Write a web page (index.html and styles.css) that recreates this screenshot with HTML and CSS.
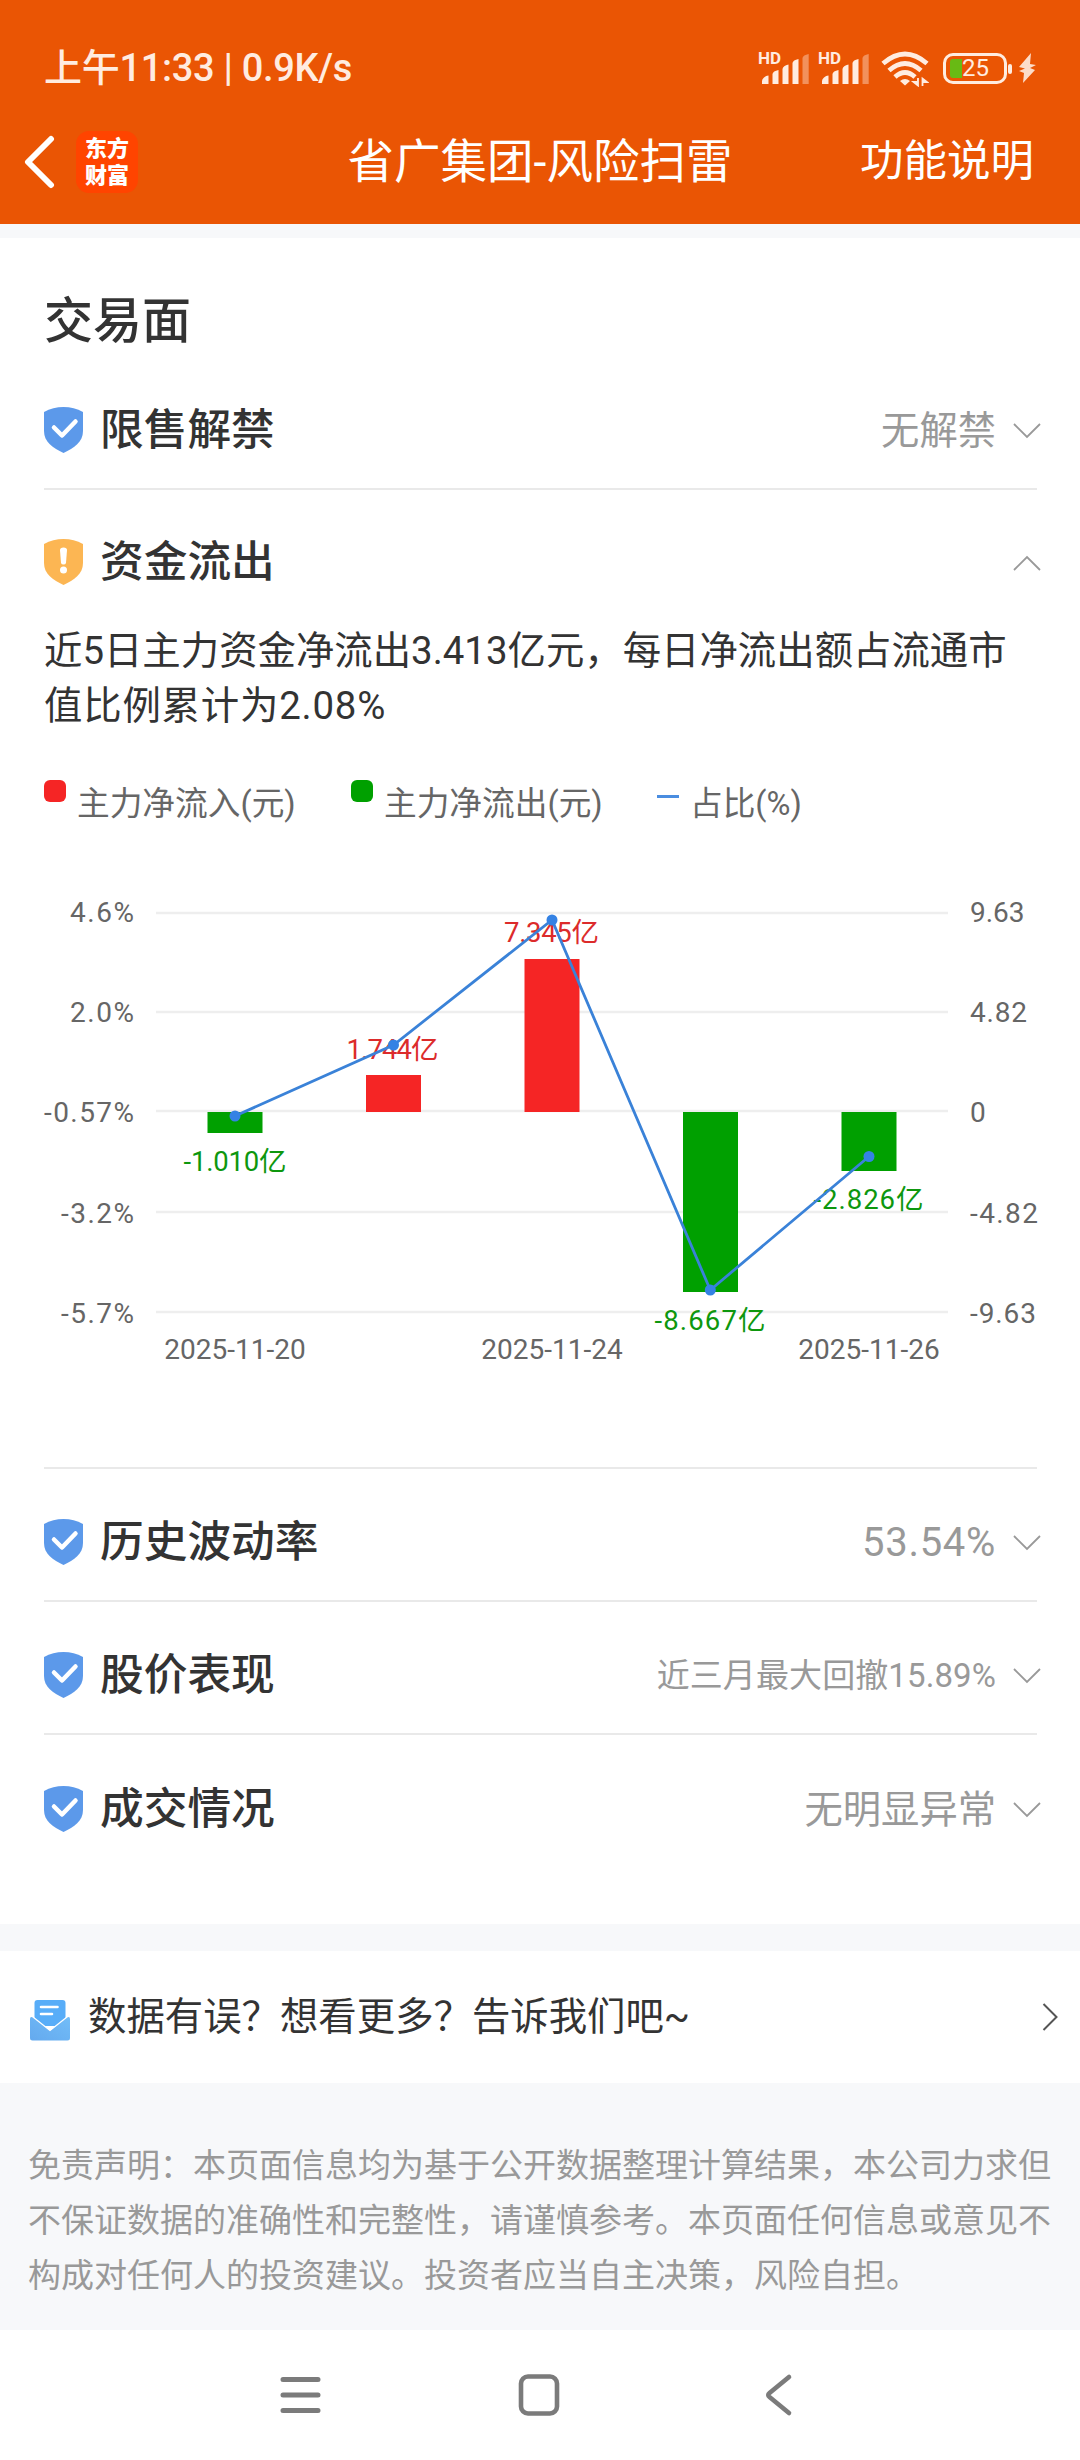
FILE: index.html
```html
<!DOCTYPE html>
<html lang="zh-CN">
<head>
    <meta charset="UTF-8">
    <meta name="viewport" content="width=device-width, initial-scale=1.0">
    <title>省广集团-风险扫雷</title>
    <link rel="stylesheet" href="styles.css">
</head>
<body>

<!-- shared icons -->
<svg class="sprite" width="0" height="0">
    <symbol id="signal" viewBox="0 0 50 34">
        <path d="M2 33V30Q2 28 4 26.500Q6 24.700 8.500 24.500V33Z"/>
        <path d="M12.500 33V23Q13 20 18.500 19V33Z"/>
        <path d="M22.500 33V18Q23 14.500 28.500 13.500V33Z"/>
        <path d="M32.500 33V12Q33 9 38.500 8V33Z"/>
        <path d="M42.500 33V7Q43 4 48.700 3V33Z" opacity="0.4"/>
    </symbol>
    <symbol id="shield" viewBox="0 0 39 46">
        <path d="M0 5Q9 0 19.500 0T39 5V24C39 35 30 41 19.500 46C9 41 0 35 0 24Z"/>
    </symbol>
    <symbol id="check" viewBox="0 0 39 46">
        <path d="M10 20.500L18 28.500L31.500 14.500" fill="none" stroke="#fff" stroke-width="4.500" stroke-linecap="round" stroke-linejoin="round"/>
    </symbol>
    <symbol id="arrow" viewBox="0 0 28 16">
        <path d="M1 1L14 14L27 1" fill="none" stroke="#999" stroke-width="1.800"/>
    </symbol>
</svg>

<header>
    <div class="status-bar">
        <span class="status-time">上午11:33 | 0.9K/s</span>
        <div class="status-icons">
            <div class="signal">
                <svg width="50" height="34"><use href="#signal"/></svg>
                <span class="hd">HD</span>
            </div>
            <div class="signal">
                <svg width="50" height="34"><use href="#signal"/></svg>
                <span class="hd">HD</span>
            </div>
            <svg class="wifi" width="48" height="36" viewBox="0 0 48 36">
                <g fill="none" stroke="#ffece0" stroke-width="4.800">
                    <path d="M2 12.500Q24 -6.500 46 12.500"/>
                    <path d="M8 19.500Q24 5.500 40 19.500"/>
                    <path d="M14 26Q24 17 34 26"/>
                </g>
                <path d="M19 30Q24 26 29 30L24 34.500Z"/>
                <path d="M37 27V34.500L32.500 31H36M41.500 35V27.500L46 31H42" stroke="#ffece0" stroke-width="1.800"/>
            </svg>
            <div class="battery">
                <div class="battery-level"></div>
                <span>25</span>
            </div>
            <svg class="bolt" width="19" height="32" viewBox="0 0 19 32">
                <path d="M13 1L1 15L7 16.500L1 19L6 21L5 31L17 18L12 16L18 13L12 12Z"/>
            </svg>
        </div>
    </div>
    <div class="title-bar">
        <svg class="back" width="32" height="54" viewBox="0 0 32 54">
            <path d="M28 4L5 27L28 50" fill="none" stroke="#fff" stroke-width="6" stroke-linecap="round" stroke-linejoin="round"/>
        </svg>
        <div class="logo">东方<br>财富</div>
        <h1>省广集团-风险扫雷</h1>
        <span class="help">功能说明</span>
    </div>
</header>

<main>
    <section class="card">
        <h2>交易面</h2>

        <div class="item first">
            <svg class="icon blue" width="39" height="46"><use href="#shield"/><use href="#check"/></svg>
            <h3>限售解禁</h3>
            <span class="value">无解禁</span>
            <svg class="arrow" width="28" height="16"><use href="#arrow"/></svg>
        </div>

        <div class="item open">
            <svg class="icon orange" width="39" height="46">
                <use href="#shield"/>
                <path d="M16 11Q16 8.500 19.500 8.500T23 11L22 24Q21.500 25.500 19.500 25.500T17 24Z" fill="#fff"/>
                <circle cx="19.500" cy="31" r="3.500" fill="#fff"/>
            </svg>
            <h3>资金流出</h3>
            <span class="value"></span>
            <svg class="arrow up" width="28" height="16"><use href="#arrow"/></svg>
        </div>

        <div class="detail">
            <p>近5日主力资金净流出3.413亿元，每日净流出额占流通市</p>
            <p class="second">值比例累计为2.08%</p>
            <div class="legend">
                <span class="in"><i></i>主力净流入(元)</span>
                <span class="out"><i></i>主力净流出(元)</span>
                <span class="rate"><i></i>占比(%)</span>
            </div>
            <svg class="chart" width="1080" height="520" viewBox="0 860 1080 520">
                <g class="grid">
                    <path d="M156 913H948M156 1012H948M156 1111H948M156 1212H948M156 1312H948"/>
                </g>
                <g class="axis left">
                    <text x="134" y="921.500" textLength="64">4.6%</text>
                    <text x="134" y="1021.500" textLength="64">2.0%</text>
                    <text x="134" y="1121.500" textLength="90">-0.57%</text>
                    <text x="134" y="1222.500" textLength="73">-3.2%</text>
                    <text x="134" y="1322.500" textLength="73">-5.7%</text>
                </g>
                <g class="axis">
                    <text x="970" y="921.500">9.63</text>
                    <text x="970" y="1021.500" textLength="57">4.82</text>
                    <text x="970" y="1121.500">0</text>
                    <text x="970" y="1222.500" textLength="68">-4.82</text>
                    <text x="970" y="1322.500" textLength="66">-9.63</text>
                </g>
                <g class="axis date">
                    <text x="235" y="1359">2025-11-20</text>
                    <text x="552" y="1359">2025-11-24</text>
                    <text x="869" y="1359">2025-11-26</text>
                </g>
                <g class="bar-in">
                    <rect x="366" y="1075" width="55" height="37"/>
                    <rect x="524.500" y="959" width="55" height="153"/>
                </g>
                <g class="bar-out">
                    <rect x="207.500" y="1112" width="55" height="21"/>
                    <rect x="683" y="1112" width="55" height="180"/>
                    <rect x="841.500" y="1112" width="55" height="59"/>
                </g>
                <g class="label">
                    <text class="red" x="392.500" y="1059" textLength="92">1.744亿</text>
                    <text class="red" x="551.500" y="941.500" textLength="95">7.345亿</text>
                    <text class="green" x="235" y="1170.500" textLength="103">-1.010亿</text>
                    <text class="green" x="710" y="1329.500" textLength="111">-8.667亿</text>
                    <text class="green" x="868.500" y="1209" textLength="110">-2.826亿</text>
                </g>
                <polyline class="line" points="235,1116 393.500,1045 552,920 710.300,1290 869,1156.500"/>
                <g class="dot">
                    <circle cx="235" cy="1116" r="5.500"/>
                    <circle cx="393.500" cy="1045" r="5.500"/>
                    <circle cx="552" cy="920" r="5.500"/>
                    <circle cx="710.300" cy="1290" r="5.500"/>
                    <circle cx="869" cy="1156.500" r="5.500"/>
                </g>
            </svg>
        </div>

        <div class="item">
            <svg class="icon blue" width="39" height="46"><use href="#shield"/><use href="#check"/></svg>
            <h3>历史波动率</h3>
            <span class="value number">53.54%</span>
            <svg class="arrow" width="28" height="16"><use href="#arrow"/></svg>
        </div>

        <div class="item">
            <svg class="icon blue" width="39" height="46"><use href="#shield"/><use href="#check"/></svg>
            <h3>股价表现</h3>
            <span class="value small">近三月最大回撤15.89%</span>
            <svg class="arrow" width="28" height="16"><use href="#arrow"/></svg>
        </div>

        <div class="item last">
            <svg class="icon blue" width="39" height="46"><use href="#shield"/><use href="#check"/></svg>
            <h3>成交情况</h3>
            <span class="value">无明显异常</span>
            <svg class="arrow" width="28" height="16"><use href="#arrow"/></svg>
        </div>
    </section>

    <section class="feedback">
        <svg class="mail" width="40" height="41" viewBox="0 0 40 41">
            <defs>
                <linearGradient id="mail" x1="0" y1="1" x2="1" y2="0">
                    <stop offset="0" stop-color="#64a9ee"/>
                    <stop offset="1" stop-color="#72bdf8"/>
                </linearGradient>
            </defs>
            <path d="M4.500 3Q4.500 0 7.500 0H32.500Q35.500 0 35.500 3V26H4.500Z" fill="#58adf8"/>
            <path d="M11 7H27.500M11 14H22" stroke="#fff" stroke-width="2.600" stroke-linecap="round"/>
            <path d="M0 19Q0 16 3 17.500L20 30.500L37 17.500Q40 16 40 19V38Q40 40.500 37.500 40.500H2.500Q0 40.500 0 38Z" fill="url(#mail)"/>
            <path d="M3 17L20 30.500L37 17" fill="none" stroke="#fff" stroke-width="1.300"/>
        </svg>
        <span>数据有误？想看更多？告诉我们吧~</span>
        <svg width="16" height="28" viewBox="0 0 16 28">
            <path d="M1.500 1L14.500 14L1.500 27" fill="none" stroke="#555" stroke-width="2"/>
        </svg>
    </section>

    <p class="disclaimer">免责声明：本页面信息均为基于公开数据整理计算结果，本公司力求但不保证数据的准确性和完整性，请谨慎参考。本页面任何信息或意见不构成对任何人的投资建议。投资者应当自主决策，风险自担。</p>
</main>

<nav>
    <svg width="42" height="44" viewBox="0 0 42 44">
        <path d="M4 6.500H39M4 22H39M4 37.500H39" fill="none" stroke="#7b7b7b" stroke-width="5" stroke-linecap="round"/>
    </svg>
    <svg width="42" height="44" viewBox="0 0 42 44">
        <rect x="3" y="3.500" width="36" height="37" rx="7" fill="none" stroke="#7b7b7b" stroke-width="4.600"/>
    </svg>
    <svg width="42" height="44" viewBox="0 0 42 44">
        <path d="M32 4L12.500 20Q10 22 12.500 24L32 40" fill="none" stroke="#7b7b7b" stroke-width="4.600" stroke-linecap="round"/>
    </svg>
</nav>

</body>
</html>
```

FILE: styles.css
```css
* {
    box-sizing: border-box;
}

body {
    font-family: Roboto, "Noto Sans CJK SC", sans-serif;
    background-color: #FFFFFF;
    color: #333333;
    margin: 0;
    padding: 0;
    width: 1080px;
}

h1, h2, h3, p {
    margin: 0;
}

svg {
    display: block;
    flex: none;
}

.sprite {
    position: absolute;
}

header {
    height: 224px;
    background-color: #EA5504;
    color: #FFFFFF;
}

.status-bar {
    display: flex;
    justify-content: space-between;
    height: 99px;
    padding: 45px 43px 0 44px;
    color: #FFECE0;
}

.status-time {
    font-size: 38px;
    font-weight: 500;
    line-height: 46px;
    letter-spacing: -0.3px;
    white-space: pre;
}

.status-icons {
    display: flex;
    align-items: flex-start;
    padding-top: 6px;
    fill: #FFECE0;
}

.signal {
    position: relative;
    margin-right: 10px;
}

.signal svg {
    margin-left: -1px;
    margin-right: 1px;
}

.hd {
    position: absolute;
    left: -3px;
    top: -1px;
    font-size: 17px;
    font-weight: 700;
    line-height: 16px;
}

.battery {
    position: relative;
    width: 64px;
    height: 31px;
    margin: 2px 0 0 14px;
    padding-left: 16px;
    border: 3px solid #FFECE0;
    border-radius: 10px;
    font-size: 24px;
    line-height: 25px;
}

.battery::after {
    content: "";
    position: absolute;
    right: -8px;
    top: 8px;
    width: 4px;
    height: 10px;
    border-radius: 2px;
    background-color: #FFECE0;
}

.battery-level {
    position: absolute;
    left: 4px;
    top: 3px;
    width: 12px;
    height: 19px;
    border-radius: 3px 0 0 3px;
    background-color: #68BA14;
}

.bolt {
    margin: 1px 0 0 11px;
    opacity: 0.9;
}

.title-bar {
    display: flex;
    align-items: center;
    height: 126px;
    padding: 0 46px 0 23px;
}

.logo {
    width: 62px;
    height: 62px;
    margin-left: 21px;
    padding-top: 4px;
    border-radius: 13px;
    background-color: #FF4400;
    font-size: 22px;
    font-weight: 900;
    line-height: 27px;
    text-align: center;
}

h1 {
    width: 390px;
    margin-left: 207px;
    font-size: 46.5px;
    font-weight: 400;
    line-height: 61px;
    text-align: center;
    white-space: nowrap;
}

.help {
    margin-left: auto;
    font-size: 43.5px;
    line-height: 60px;
}

main {
    border-top: 14px solid #F7F8FA;
}

.card {
    height: 1686px;
    padding: 0 43px 0 44px;
}

h2 {
    height: 133px;
    font-size: 49px;
    font-weight: 500;
    line-height: 167px;
}

.item {
    display: flex;
    align-items: center;
    height: 133px;
    padding-top: 14px;
    border-bottom: 2px solid #E9E9E9;
}

.item.first {
    height: 119px;
    padding-top: 0;
}

.item.open {
    height: 118px;
    margin-top: 13px;
    padding-top: 0;
}

.item.open,
.item.last {
    border-bottom: none;
}

.icon.blue {
    fill: #5C99EA;
}

.icon.orange {
    fill: #FCB653;
}

h3 {
    margin-left: 17px;
    font-size: 43.7px;
    font-weight: 500;
    line-height: 60px;
}

.value {
    margin-left: auto;
    padding-top: 2px;
    color: #999999;
    font-size: 38.3px;
    line-height: 50px;
}

.value.number {
    font-size: 40px;
    letter-spacing: 0.7px;
}

.value.small {
    font-size: 33px;
    letter-spacing: 0.1px;
}

.arrow {
    margin: 2px -4px 0 17px;
}

.arrow.up {
    transform: rotate(180deg);
}

.detail {
    height: 848px;
    border-bottom: 2px solid #E9E9E9;
}

.detail p {
    padding-top: 2px;
    font-size: 38.4px;
    line-height: 55px;
    white-space: nowrap;
}

.detail .second {
    padding-top: 0;
    letter-spacing: 0.8px;
}

.legend {
    display: flex;
    height: 127px;
    padding-top: 46px;
    color: #666666;
    font-size: 32.7px;
    line-height: 50px;
}

.legend span {
    display: flex;
    white-space: nowrap;
}

.legend i {
    width: 22px;
    height: 22px;
    margin: 1px 11px 0 0;
    border-radius: 6px;
}

.legend .in {
    width: 307px;
}

.legend .out {
    width: 306px;
}

.legend .in i {
    background-color: #F52525;
}

.legend .out i {
    background-color: #00A000;
}

.legend .rate i {
    height: 3px;
    margin-top: 16px;
    border-radius: 0;
    background-color: #4A8DE0;
}

.chart {
    margin-left: -44px;
}

.grid {
    fill: none;
    stroke: #EEEEEE;
    stroke-width: 2.5;
}

.axis {
    fill: #666666;
    font-size: 28px;
}

.axis.left {
    text-anchor: end;
}

.axis.date,
.label {
    text-anchor: middle;
}

.label {
    font-size: 27.5px;
}

.label .red {
    fill: #DC2B2B;
}

.label .green {
    fill: #0E970E;
}

.bar-in {
    fill: #F52525;
}

.bar-out {
    fill: #00A000;
}

.line {
    fill: none;
    stroke: #3A82D8;
    stroke-width: 2.8;
}

.dot {
    fill: #3482E4;
}

.feedback {
    display: flex;
    align-items: center;
    height: 159px;
    padding: 0 22px 0 30px;
    border-top: 27px solid #F7F8FA;
    font-size: 38.4px;
    line-height: 50px;
}

.mail {
    margin-top: 7px;
}

.feedback span {
    flex: 1;
    margin-left: 18px;
}

.disclaimer {
    height: 247px;
    padding: 55px 28px 0;
    background-color: #F7F8FA;
    color: #999999;
    font-size: 33px;
    line-height: 55px;
}

nav {
    display: flex;
    justify-content: center;
    gap: 197px;
    height: 130px;
    padding: 43px 2px 0 0;
}
```
